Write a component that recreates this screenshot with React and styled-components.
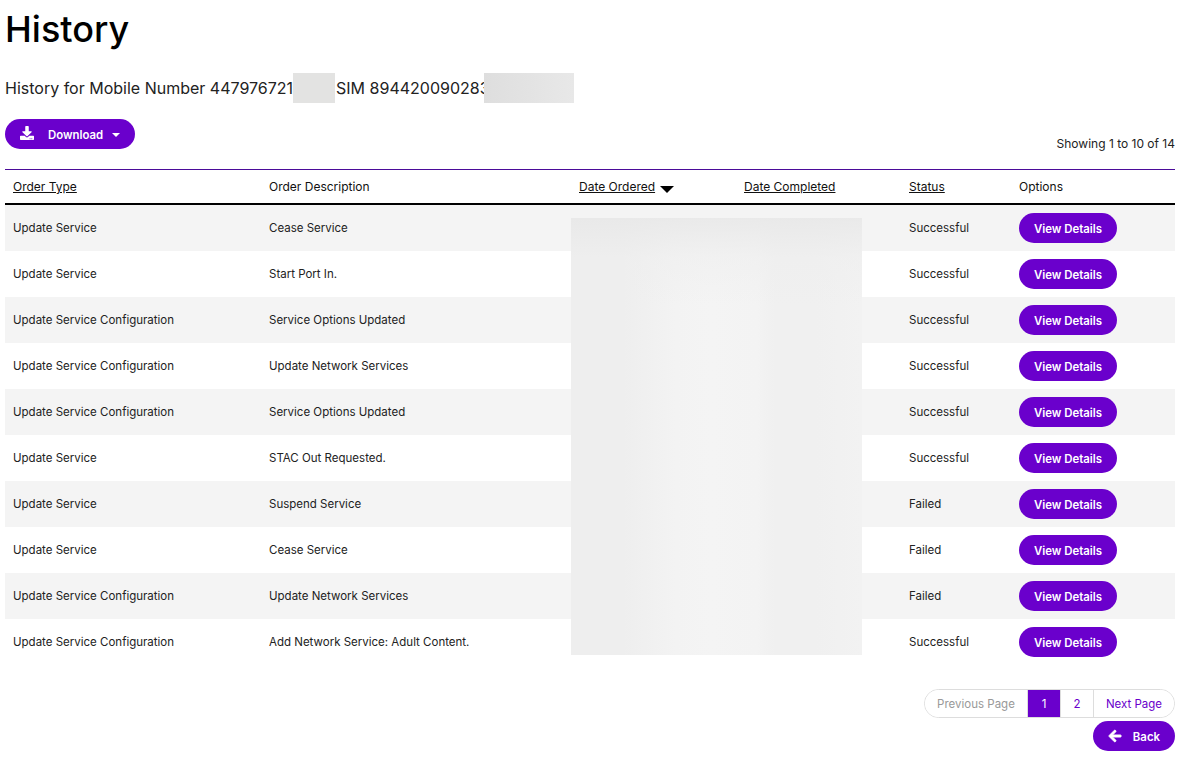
import React from "react";
import styled, { createGlobalStyle } from "styled-components";
import { FaDownload, FaArrowLeft } from "react-icons/fa";

const PURPLE = "#6a00cc";

const rows = [
  ["Update Service", "Cease Service", "Successful"],
  ["Update Service", "Start Port In.", "Successful"],
  ["Update Service Configuration", "Service Options Updated", "Successful"],
  ["Update Service Configuration", "Update Network Services", "Successful"],
  ["Update Service Configuration", "Service Options Updated", "Successful"],
  ["Update Service", "STAC Out Requested.", "Successful"],
  ["Update Service", "Suspend Service", "Failed"],
  ["Update Service", "Cease Service", "Failed"],
  ["Update Service Configuration", "Update Network Services", "Failed"],
  ["Update Service Configuration", "Add Network Service: Adult Content.", "Successful"],
];

const GlobalStyle = createGlobalStyle`
  html, body {
    margin: 0;
    background: #fff;
    color: #111;
    font-family: Inter, "Liberation Sans", sans-serif;
  }
`;

const Page = styled.div`
  width: 1170px;
  height: 758px;
  overflow: hidden;
  padding: 0 11px 0 5px;
`;

const Title = styled.h1`
  margin: 0;
  padding-top: 7px;
  height: 73px;
  box-sizing: border-box;
  font-size: 36px;
  line-height: 44px;
  font-weight: 500;
  color: #000;
`;

const SubTitle = styled.div`
  display: flex;
  align-items: center;
  height: 30px;
  font-size: 16px;
  font-weight: 400;
  color: #222;
`;

const Hidden = styled.span`
  display: block;
  height: 30px;
  width: ${(p) => p.$w}px;
  margin-left: ${(p) => p.$ml}px;
  margin-right: ${(p) => p.$mr}px;
  background: ${(p) => p.$bg};
`;

const Toolbar = styled.div`
  display: flex;
  justify-content: space-between;
  align-items: flex-end;
  margin-top: 16px;
  height: 30px;
  padding-bottom: 20px;
`;

const Pill = styled.button`
  display: inline-flex;
  align-items: center;
  height: 30px;
  border: 0;
  border-radius: 15px;
  background: ${PURPLE};
  color: #fff;
  font-family: inherit;
  font-size: 11.4px;
  font-weight: 600;
  padding: 1px 15px 0;
  white-space: nowrap;
`;

const DownloadIcon = styled(FaDownload)`
  margin-right: 14px;
  margin-top: -3px;
  font-size: 14px;
`;

const BackIcon = styled(FaArrowLeft)`
  margin-right: 11px;
  margin-top: -2px;
  font-size: 14px;
  stroke: currentColor;
  stroke-width: 30px;
`;

const Caret = styled.span`
  width: 0;
  height: 0;
  margin-left: 9px;
  border-left: 4px solid transparent;
  border-right: 4px solid transparent;
  border-top: 4px solid #fff;
`;

const Showing = styled.div`
  font-size: 12px;
  color: #222;
  line-height: 14px;
  margin-bottom: -2px;
`;

const TableWrap = styled.div`
  position: relative;
`;

const Table = styled.table`
  width: 1170px;
  table-layout: fixed;
  border-collapse: separate;
  border-spacing: 0;
  font-size: 11.5px;
  color: #222;
  border-top: 1px solid #4b0b99;
`;

const Th = styled.th`
  height: 33px;
  padding: 0 8px;
  text-align: left;
  font-size: 12px;
  font-weight: 400;
  color: #111;
  border-bottom: 2px solid #000;
  text-decoration: ${(p) => (p.$sort ? "underline" : "none")};
  white-space: nowrap;
`;

const Row = styled.tr`
  height: 46px;
  background: ${(p) => (p.$odd ? "#f4f4f4" : "#fff")};
`;

const Td = styled.td`
  padding: 0 8px 1px;
  white-space: nowrap;
`;

const ActionCell = styled.td`
  padding: 0 8px;
  white-space: nowrap;
`;

const ArrowDown = styled.span`
  display: inline-block;
  width: 0;
  height: 0;
  margin-left: 5px;
  vertical-align: -2px;
  border-left: 7px solid transparent;
  border-right: 7px solid transparent;
  border-top: 7px solid #000;
`;

// blurred-out date columns
const Redacted = styled.div`
  position: absolute;
  left: 566px;
  top: 49px;
  width: 291px;
  height: 437px;
  background:
    linear-gradient(180deg, rgba(232, 232, 232, 0.85) 0%, rgba(238, 238, 238, 0.5) 9%, rgba(240, 240, 240, 0) 20%),
    linear-gradient(90deg, #eeeeee 0%, #eeeeee 18%, #f3f3f3 36%, #f4f4f4 48%, #f3f3f3 64%, #f0f0f0 70%, #f0f0f0 84%, #f2f2f2 100%);
`;

const Footer = styled.div`
  display: flex;
  flex-direction: column;
  align-items: flex-end;
  gap: 3px;
  margin-top: 24px;
`;

const Pager = styled.div`
  display: flex;
  height: 27px;
  border: 1px solid #ddd;
  border-radius: 15px;
  overflow: hidden;
  font-size: 11.5px;
`;

const PageItem = styled.div`
  box-sizing: border-box;
  display: flex;
  align-items: center;
  justify-content: center;
  width: ${(p) => p.$w}px;
  background: ${(p) => (p.$active ? PURPLE : "#fff")};
  color: ${(p) => (p.$active ? "#fff" : p.$off ? "#999" : PURPLE)};
  border-left: ${(p) => (p.$first ? "0" : "1px solid #ddd")};
`;

export default function App() {
  return (
    <Page>
      <GlobalStyle />
      <Title>History</Title>
      <SubTitle>
        History for Mobile Number 447976721
        <Hidden $w={42} $ml={0} $mr={1} $bg="#e3e3e2" />
        SIM 894420090283
        <Hidden $w={90} $ml={-6} $mr={0} $bg="linear-gradient(90deg, #dedede, #e8e8e8)" />
      </SubTitle>
      <Toolbar>
        <Pill>
          <DownloadIcon />
          Download
          <Caret />
        </Pill>
        <Showing>Showing 1 to 10 of 14</Showing>
      </Toolbar>
      <TableWrap>
        <Table>
          <colgroup>
            <col style={{ width: 256 }} />
            <col style={{ width: 310 }} />
            <col style={{ width: 165 }} />
            <col style={{ width: 165 }} />
            <col style={{ width: 110 }} />
            <col />
          </colgroup>
          <thead>
            <tr>
              <Th $sort>Order Type</Th>
              <Th>Order Description</Th>
              <Th>
                <u>Date Ordered</u>
                <ArrowDown />
              </Th>
              <Th $sort>Date Completed</Th>
              <Th $sort>Status</Th>
              <Th colSpan={2}>Options</Th>
            </tr>
          </thead>
          <tbody>
            {rows.map((r, i) => (
              <Row key={i} $odd={i % 2 === 0}>
                <Td>{r[0]}</Td>
                <Td>{r[1]}</Td>
                <Td />
                <Td />
                <Td>{r[2]}</Td>
                <ActionCell colSpan={2}>
                  <Pill>View Details</Pill>
                </ActionCell>
              </Row>
            ))}
          </tbody>
        </Table>
        <Redacted />
      </TableWrap>
      <Footer>
        <Pager>
          <PageItem $w={102} $off $first>Previous Page</PageItem>
          <PageItem $w={33} $active>1</PageItem>
          <PageItem $w={33}>2</PageItem>
          <PageItem $w={81}>Next Page</PageItem>
        </Pager>
        <Pill>
          <BackIcon />
          Back
        </Pill>
      </Footer>
    </Page>
  );
}
